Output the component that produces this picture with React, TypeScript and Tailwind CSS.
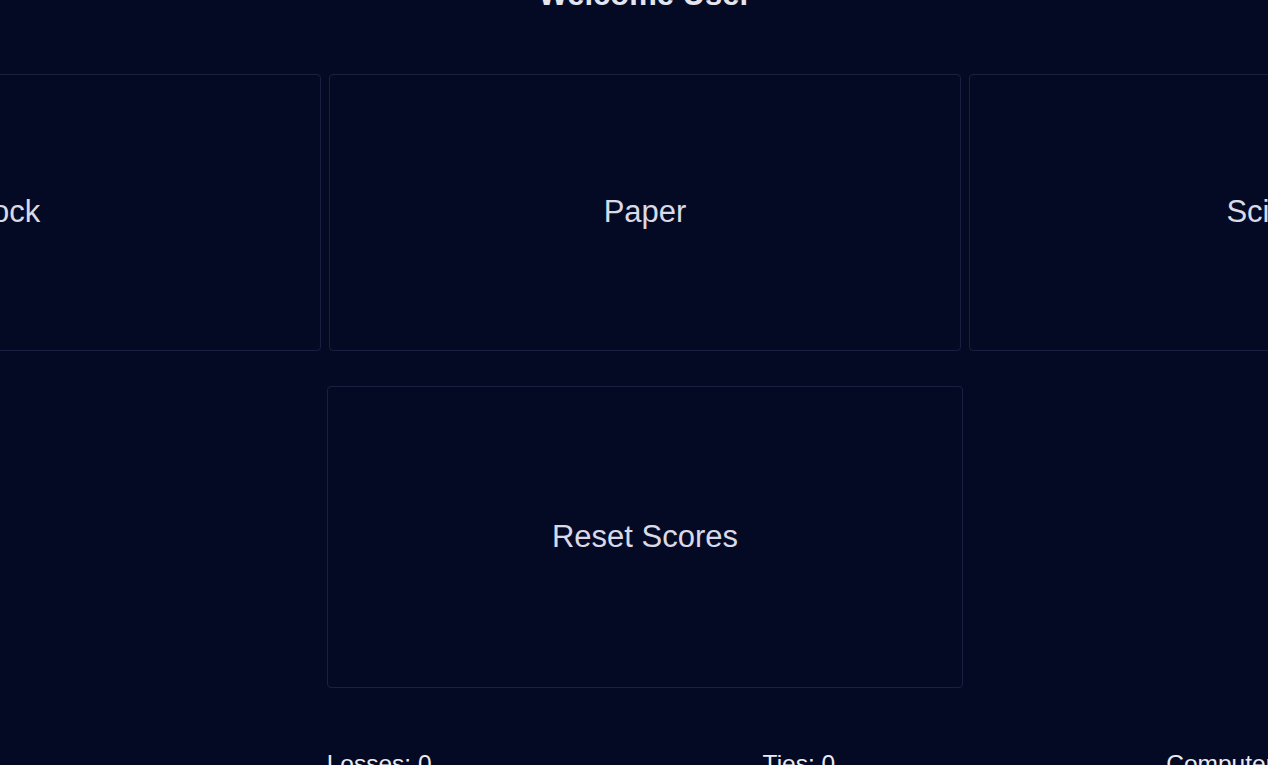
import React, { useState } from 'react';

type Choice = 'Rock' | 'Paper' | 'Scissors';

const CHOICES: Choice[] = ['Rock', 'Paper', 'Scissors'];

const App: React.FC = () => {
  const [scores, setScores] = useState({ wins: 0, losses: 0, ties: 0 });
  const [computerChoice, setComputerChoice] = useState<string>('-');

  const play = (choice: Choice) => {
    const cpu = CHOICES[Math.floor(Math.random() * 3)];
    setComputerChoice(cpu);
    if (cpu === choice) {
      setScores(s => ({ ...s, ties: s.ties + 1 }));
    } else if (
      (choice === 'Rock' && cpu === 'Scissors') ||
      (choice === 'Paper' && cpu === 'Rock') ||
      (choice === 'Scissors' && cpu === 'Paper')
    ) {
      setScores(s => ({ ...s, wins: s.wins + 1 }));
    } else {
      setScores(s => ({ ...s, losses: s.losses + 1 }));
    }
  };

  const reset = () => {
    setScores({ wins: 0, losses: 0, ties: 0 });
    setComputerChoice('-');
  };

  return (
    <div className="w-full h-[765px] overflow-hidden bg-[#050a24] font-['Liberation_Sans',Arial,sans-serif]">
      <div className="w-[1290px] flex flex-col items-center">
        <h1 className="mt-[-21px] mb-16 h-[31px] text-[31px] leading-none font-bold text-[#e4e4ee] whitespace-nowrap">
          Welcome User
        </h1>

        <div className="flex gap-2 justify-center w-[1290px]">
          {CHOICES.map(choice => (
            <button
              key={choice}
              onClick={() => play(choice)}
              className="shrink-0 w-[632px] h-[277px] flex items-center justify-center rounded border border-[#1b2040] bg-[#050a24] text-[31px] text-[#d9d9e8]"
            >
              {choice}
            </button>
          ))}
        </div>

        <button
          onClick={reset}
          className="mt-[35px] w-[636px] h-[302px] flex items-center justify-center rounded border border-[#1b2040] bg-[#050a24] text-[31px] text-[#d9d9e8]"
        >
          Reset Scores
        </button>

        <div className="mt-[58px] self-start ml-[-86px] flex gap-[331px] whitespace-nowrap text-[24.5px] leading-[1.5] text-[#ececf4]">
          <span>Wins: {scores.wins}</span>
          <span>Losses: {scores.losses}</span>
          <span>Ties: {scores.ties}</span>
          <span>Computer: {computerChoice}</span>
        </div>
      </div>
    </div>
  );
};

export default App;
